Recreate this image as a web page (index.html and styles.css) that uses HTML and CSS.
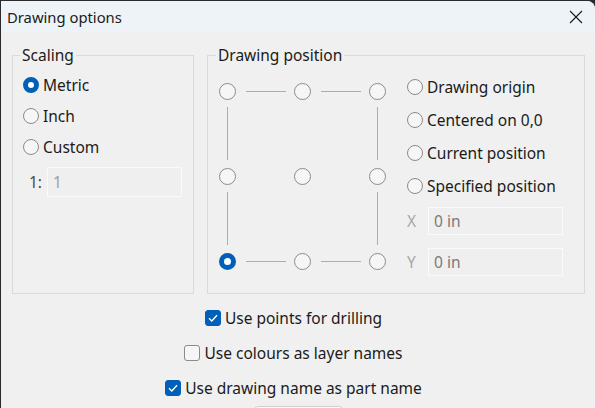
FILE: index.html
```html
<!DOCTYPE html>
<html>
<head>
<meta charset="utf-8">
<link rel="stylesheet" href="styles.css">
</head>
<body>
<div class="window">
  <div class="titlebar">
    <span class="title">Drawing options</span>
    <span class="close"><svg width="14" height="14" viewBox="0 0 14 14"><path d="M1 1L13 13M13 1L1 13" stroke="#1a1a1a" stroke-width="1.1" fill="none"/></svg></span>
  </div>
  <div class="content">
    <div class="groups">
      <fieldset class="group scaling">
        <legend>Scaling</legend>
        <div class="radio-list">
          <div class="radio-row"><span class="radio checked"></span><span>Metric</span></div>
          <div class="radio-row"><span class="radio"></span><span>Inch</span></div>
          <div class="radio-row"><span class="radio"></span><span>Custom</span></div>
        </div>
        <div class="ratio-row"><span class="ratio-label">1:</span><div class="field dim">1</div></div>
      </fieldset>
      <fieldset class="group position">
        <legend>Drawing position</legend>
        <div class="pos-body">
          <div class="pos-grid">
            <span class="radio"></span><span class="hline"></span><span class="radio"></span><span class="hline"></span><span class="radio"></span>
            <span class="vline"></span><span></span><span></span><span></span><span class="vline"></span>
            <span class="radio"></span><span></span><span class="radio"></span><span></span><span class="radio"></span>
            <span class="vline"></span><span></span><span></span><span></span><span class="vline"></span>
            <span class="radio checked"></span><span class="hline"></span><span class="radio"></span><span class="hline"></span><span class="radio"></span>
          </div>
          <div class="pos-options">
            <div class="opt-row"><span class="radio"></span><span>Drawing origin</span></div>
            <div class="opt-row"><span class="radio"></span><span>Centered on 0,0</span></div>
            <div class="opt-row"><span class="radio"></span><span>Current position</span></div>
            <div class="opt-row"><span class="radio"></span><span>Specified position</span></div>
            <div class="coord-row first"><span class="coord-label">X</span><div class="field">0 in</div></div>
            <div class="coord-row"><span class="coord-label">Y</span><div class="field">0 in</div></div>
          </div>
        </div>
      </fieldset>
    </div>
    <div class="checks">
      <div class="check-row"><span class="checkbox checked"><svg width="10" height="8" viewBox="0 0 10 8"><path d="M1 4.2L3.8 7L9 1.2" stroke="#fff" stroke-width="1.4" fill="none"/></svg></span><span>Use points for drilling</span></div>
      <div class="check-row"><span class="checkbox"></span><span>Use colours as layer names</span></div>
      <div class="check-row"><span class="checkbox checked"><svg width="10" height="8" viewBox="0 0 10 8"><path d="M1 4.2L3.8 7L9 1.2" stroke="#fff" stroke-width="1.4" fill="none"/></svg></span><span>Use drawing name as part name</span></div>
    </div>
    <div class="buttons"><span class="btn"></span></div>
  </div>
</div>
</body>
</html>
```
FILE: styles.css
```css
* { box-sizing: border-box; }
html, body { margin: 0; padding: 0; }
body {
  background: #2a2a2a;
  width: 595px;
  height: 408px;
  overflow: hidden;
  font-family: "Noto Sans", "Open Sans", sans-serif;
  font-size: 15.5px;
  color: #1b1b1b;
}
.window {
  margin: 1px 0 0 1px;
  width: 594px;
  height: 407px;
  background: #f0f0f0;
  border-top-right-radius: 8px;
  overflow: hidden;
}
.titlebar {
  height: 32px;
  background: #edf3f7;
  display: flex;
  align-items: center;
  justify-content: space-between;
  padding: 0 12px 0 6px;
}
.title { font-size: 14.8px; line-height: 20px; }
.close { display: flex; width: 14px; height: 14px; }
.content {
  padding: 12px 10px 0 11px;
}
.groups {
  display: flex;
  gap: 13px;
  height: 249px;
}
.group {
  margin: 0;
  border: 1px solid #dadada;
  padding: 0;
  min-width: 0;
}
.group legend {
  margin-left: -3px;
  padding: 0 2px;
  line-height: 20px;
}
.scaling { width: 182px; padding: 4px 10px 0 10px; }
.position { width: 378px; padding: 5px 10px 0 11px; }
.position legend { margin-left: -3px; }
.radio {
  width: 16px;
  height: 16px;
  border-radius: 50%;
  border: 1px solid #8b8b8b;
  background: #f6f6f6;
  flex: none;
  display: block;
}
.radio.checked {
  border: 5px solid #005fb8;
  background: #fff;
}
.radio-row {
  height: 31px;
  display: flex;
  align-items: center;
  gap: 4px;
}
.ratio-row {
  display: flex;
  align-items: center;
  margin-top: 5px;
  padding-left: 6px;
}
.ratio-label { width: 18px; color: #4a4a4a; }
.field {
  height: 30px;
  width: 135px;
  border: 1px solid #fafafa;
  background: #efefef;
  display: flex;
  align-items: center;
  padding-left: 5px;
  color: #7a7a7a;
}
.field.dim { color: #a0a0a0; }
.pos-body { display: flex; gap: 21px; }
.pos-grid {
  margin-top: 13px;
  display: grid;
  grid-template-columns: 17px 58px 17px 58px 17px;
  grid-template-rows: 17px 68px 17px 68px 17px;
  align-self: flex-start;
}
.pos-grid .radio { width: 17px; height: 17px; }
.hline {
  align-self: center;
  height: 1px;
  background: #adadad;
  margin: 0 8px 0 10px;
}
.vline {
  justify-self: center;
  width: 1px;
  background: #adadad;
  margin: 7px 0 8px;
}
.pos-options { display: flex; flex-direction: column; }
.opt-row {
  height: 33px;
  display: flex;
  align-items: center;
  gap: 4px;
}
.coord-row {
  display: flex;
  align-items: center;
  margin-top: 13px;
}
.coord-row.first { margin-top: 5px; }
.coord-row .field { height: 28px; width: 135px; }
.coord-label { width: 21px; text-align: left; color: #a8a8a8; }
.checks {
  display: flex;
  flex-direction: column;
  align-items: center;
  margin-top: 6px;
  padding-right: 10px;
}
.check-row {
  height: 35px;
  display: flex;
  align-items: center;
  gap: 4px;
}
.checkbox {
  width: 16px;
  height: 16px;
  border-radius: 3px;
  border: 1px solid #8b8b8b;
  background: #f6f6f6;
  display: flex;
  align-items: center;
  justify-content: center;
  flex: none;
}
.checkbox.checked { background: #005fb8; border-color: #005fb8; }
.buttons { display: flex; justify-content: center; margin-top: 1px; padding-right: 1px; }
.btn {
  display: block;
  width: 89px;
  height: 30px;
  border: 1px solid #d0d0d0;
  border-radius: 4px;
  background: #fbfbfb;
}
```
